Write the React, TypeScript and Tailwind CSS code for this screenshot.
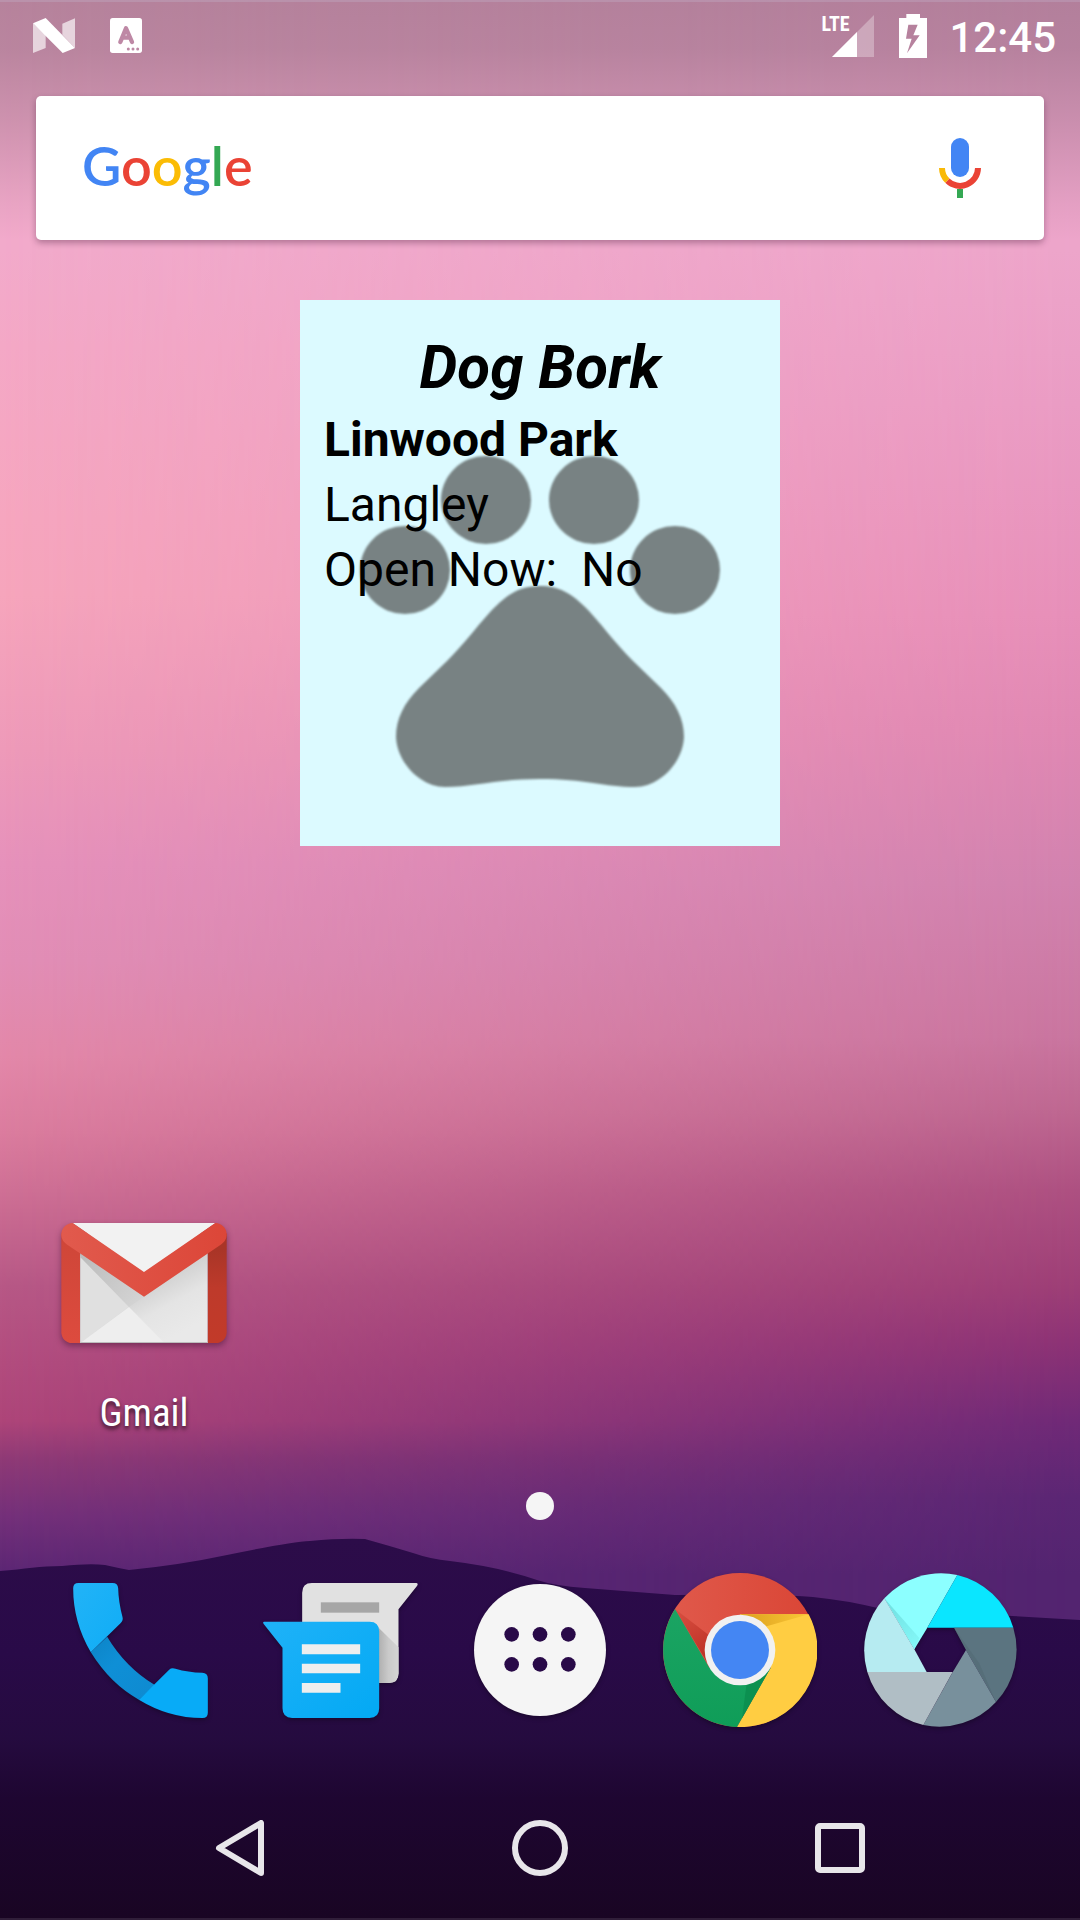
import React from "react";

function Wallpaper() {
  return (
    <div aria-hidden="true" className="absolute inset-0 -z-10 overflow-hidden bg-[linear-gradient(to_bottom,#f2aacb_0%,#f2aacb_13%,#f4a8c6_18%,#f6a6bf_27%,#f6a5bc_31%,#ee9ab9_39%,#e691bb_45%,#e28eb6_50%,#e388a9_55%,#db7c9e_59%,#cf7095_62%,#b75886_67%,#b24c7e_71%,#ae4579_74%,#8f3a76_76%,#74307a_79%,#5b2674_82%)]">
      <div className="absolute inset-0 bg-[linear-gradient(to_bottom,#eda5ca_0%,#eda5ca_13%,#ea9cc4_21%,#e78fb9_32%,#e088b3_38%,#d182ae_46%,#c9759f_54%,#bd6690_58%,#ad5081_62%,#9d3e76_67%,#8c3275_70%,#6f2977_74%,#5b2674_78%,#532470_82%)] [mask-image:linear-gradient(to_right,transparent,black)]" />
      <div className="absolute inset-x-0 top-0 h-60 bg-[linear-gradient(to_bottom,rgba(60,50,60,0.33)_0%,rgba(60,50,60,0.31)_20%,rgba(60,50,60,0.2)_50%,rgba(60,50,60,0.05)_85%,rgba(60,50,60,0)_100%)]" />
      <svg className="absolute inset-0 h-full w-full" viewBox="0 0 1080 1920" preserveAspectRatio="none">
        <defs>
          <linearGradient id="hill" x1="0" y1="1540" x2="0" y2="1920" gradientUnits="userSpaceOnUse">
            <stop offset="0" stopColor="#2c0c49" />
            <stop offset="0.3" stopColor="#290a48" />
            <stop offset="0.52" stopColor="#250b3f" />
            <stop offset="0.68" stopColor="#1e0631" />
            <stop offset="1" stopColor="#190523" />
          </linearGradient>
        </defs>
        <path fill="url(#hill)" d="M0 1571 C25 1569 40 1566 62 1566 Q90 1563 105 1565 Q118 1568 129 1570 Q180 1565 227 1555 Q290 1542 310 1541 Q340 1538 365 1539 Q390 1546 413 1553 Q430 1559 450 1561 Q500 1567 537 1580 Q555 1586 585 1588 L675 1595 Q770 1594 813 1597 Q845 1600 882 1609 Q950 1611 1012 1616 L1080 1620 V1920 H0Z" />
        <rect y="1918" width="1080" height="2" fill="#fff" opacity="0.1" />
        <rect width="1080" height="2" fill="#cfd0ea" opacity="0.2" />
      </svg>
    </div>
  );
}

function StatusBar() {
  return (
    <header className="flex h-[72px] items-start justify-between pl-[33px] pr-6 text-white">
      <div className="flex gap-[35px] pt-[18px]">
        <svg aria-label="Android N" className="h-[35px] w-[42px]" viewBox="99 55 126 105" fill="#fff">
          <path d="M99 71 L137 105 V145 L99 160Z M187 72 L225 56 V145 L187 105Z" opacity="0.65" />
          <path d="M99 71 L137 55 L225 145 L188 160Z" />
        </svg>
        <svg aria-label="Keyboard notification" className="h-[35px] w-8" viewBox="330 55 96 105">
          <rect x="330" y="55" width="96" height="105" rx="8" fill="#fff" />
          <g fill="none" stroke="#be88a5" strokeWidth="13" strokeLinecap="round" strokeLinejoin="round">
            <path d="M361 127 L378 86 L396 127 M367 114 H390" />
          </g>
          <g fill="#be88a5">
            <circle cx="385" cy="148" r="4.5" />
            <circle cx="399" cy="148" r="4.5" />
            <circle cx="413" cy="148" r="4.5" />
          </g>
        </svg>
      </div>
      <div className="flex pt-3.5">
        <div className="relative h-[43px] w-[53px]">
          <svg aria-label="Signal" className="h-full w-full" viewBox="0 0 53 43" fill="#fff">
            <path d="M11 43 L53 1 V43Z" opacity="0.3" />
            <path d="M11 43 L36 18 V43Z" />
          </svg>
          <span className="absolute left-0 top-0 font-['Roboto_Condensed',Roboto,sans-serif] text-[20px] leading-5 font-bold">LTE</span>
        </div>
        <svg aria-label="Battery charging" className="ml-[25px] h-11 w-7" viewBox="357 42 84 132">
          <path fill="#fff" fillRule="evenodd" d="M379 42 H420 V54 H441 V174 H357 V54 H379Z M385 74 L378 116 H395 L381 160 L419 106 H400 L413 74Z" />
        </svg>
        <time className="ml-[22px] text-[42px] leading-[48px] font-medium">12:45</time>
      </div>
    </header>
  );
}

function SearchBar() {
  return (
    <form role="search" className="mx-9 mt-6 flex h-36 items-center justify-between rounded-[5px] bg-white pl-[46px] pr-[63px] shadow-[0_3px_6px_rgba(60,20,50,0.35)]">
      <button type="button" className="pb-1 font-[Lato,sans-serif] text-[54px] leading-[70px] font-semibold">
        <span className="text-[#4285f4]">G</span>
        <span className="text-[#ea4335]">o</span>
        <span className="text-[#fbbc05]">o</span>
        <span className="text-[#4285f4]">g</span>
        <span className="text-[#34a853]">l</span>
        <span className="text-[#ea4335]">e</span>
      </button>
      <button type="button" aria-label="Voice search">
        <svg className="h-[60px] w-[42px]" viewBox="477 414 126 180">
          <rect x="513" y="414" width="54" height="117" rx="27" fill="#4285f4" />
          <path d="M594 504 A54 54 0 0 1 502 542" fill="none" stroke="#ea4335" strokeWidth="18" />
          <path d="M486 504 A54 54 0 0 0 502 542" fill="none" stroke="#f9b907" strokeWidth="18" />
          <rect x="531" y="567" width="18" height="27" fill="#34a853" />
        </svg>
      </button>
    </form>
  );
}

function DogParkWidget() {
  return (
    <section className="relative mx-auto mt-[60px] min-h-[546px] w-[480px] max-w-full bg-[#dcfaff] px-6 pt-8 text-black">
      <svg aria-hidden="true" className="absolute left-0 top-0 h-[546px] w-full blur-[1px]" viewBox="0 0 480 546" fill="#788283">
        <ellipse cx="186" cy="200" rx="45" ry="44" />
        <ellipse cx="294" cy="200" rx="45" ry="44" />
        <ellipse cx="105" cy="270" rx="45" ry="44" />
        <ellipse cx="375" cy="270" rx="45" ry="44" />
        <path d="M240 286 C222 286 209 292 191 311 C173 331 164 344 147 361 L119 388 C104 403 96 419 96 437 C97 463 121 487 145 487 C175 487 195 479 240 479 C285 479 305 487 335 487 C359 487 383 463 384 437 C384 419 376 403 361 388 L333 361 C316 344 307 331 289 311 C271 292 258 286 240 286Z" />
      </svg>
      <div className="relative">
        <h1 className="mb-[3px] text-center text-[60px] leading-[72px] font-bold italic">Dog Bork</h1>
        <h2 className="text-[48px] leading-[65px] font-bold">Linwood Park</h2>
        <p className="text-[48px] leading-[65px]">Langley</p>
        <p className="text-[48px] leading-[65px] whitespace-pre">Open Now:  No</p>
      </div>
    </section>
  );
}

function GmailIcon() {
  return (
    <svg aria-hidden="true" className="h-[120px] w-[166px] overflow-visible drop-shadow-[0_3px_3px_rgba(50,10,40,0.45)]" viewBox="64 69 496 360">
      <defs>
        <linearGradient id="gm-left" x1="0" y1="0" x2="0" y2="1"><stop offset="0" stopColor="#ce4638" /><stop offset="1" stopColor="#dd4b3e" /></linearGradient>
        <linearGradient id="gm-right" x1="0" y1="0" x2="0" y2="1"><stop offset="0.15" stopColor="#a93527" /><stop offset="0.5" stopColor="#be3a2b" /><stop offset="1" stopColor="#c23a29" /></linearGradient>
        <linearGradient id="gm-flap" x1="0" y1="0" x2="1" y2="0"><stop offset="0" stopColor="#e15a4d" /><stop offset="1" stopColor="#dc4638" /></linearGradient>
        <linearGradient id="gm-shade" x1="312" y1="200" x2="420" y2="400" gradientUnits="userSpaceOnUse"><stop offset="0" stopColor="#c4c4c4" /><stop offset="0.6" stopColor="#e4e4e4" /><stop offset="1" stopColor="#e9e9e9" /></linearGradient>
        <linearGradient id="gm-dark" x1="130" y1="180" x2="290" y2="320" gradientUnits="userSpaceOnUse"><stop offset="0" stopColor="#bdbdbd" /><stop offset="1" stopColor="#d4d4d4" /></linearGradient>
      </defs>
      <path fill="url(#gm-left)" d="M64 100 L121 150 V429 H96 A32 32 0 0 1 64 397Z" />
      <path fill="url(#gm-right)" d="M560 100 L503 150 V429 H528 A32 32 0 0 0 560 397Z" />
      <rect x="121" y="100" width="382" height="329" fill="url(#gm-shade)" />
      <path fill="#e0e0e0" d="M121 165 L267 320 L121 429Z" />
      <path fill="url(#gm-dark)" d="M121 150 L312 280 V290 L267 321 L121 172Z" />
      <path fill="#eee" d="M121 429 L267 321 L374 429Z" />
      <path fill="#f2f2f2" d="M98 69 H526 L312 220Z" />
      <path fill="url(#gm-flap)" d="M98 69 L312 216 L526 69 C545 70 560 84 560 103 C560 118 553 127 541 135 L312 290 L83 135 C71 127 64 118 64 103 C64 84 80 69 98 69Z" />
      <rect x="121" y="426" width="382" height="3" fill="#bdbdbd" />
    </svg>
  );
}

function PhoneIcon() {
  return (
    <svg aria-hidden="true" className="h-[135px] w-[135px]" viewBox="68 97 404 405">
      <defs>
        <linearGradient id="ph" x1="0" y1="0" x2="1" y2="1"><stop offset="0" stopColor="#22b3f7" /><stop offset="1" stopColor="#0fadf6" /></linearGradient>
        <linearGradient id="ph-h" x1="0" y1="0" x2="1" y2="1"><stop offset="0" stopColor="#0c84c6" /><stop offset="0.4" stopColor="#0f8fd6" /><stop offset="1" stopColor="#0e8ad0" /></linearGradient>
      </defs>
      <path fill="url(#ph-h)" d="M170 258 Q225 350 313 403 L265 447 Q180 400 121 305Z" />
      <path fill="url(#ph)" d="M84 97 H186 Q202 97 203 113 Q204 155 216 199 Q219 209 210 218 L121 305 Q68 215 68 113 Q68 97 84 97Z" />
      <path fill="#08abf7" d="M265 447 L356 357 Q363 350 375 354 Q413 365 455 366 Q472 367 472 383 V486 Q472 502 456 502 Q355 502 265 447Z" />
    </svg>
  );
}

function MessagesIcon() {
  return (
    <svg aria-hidden="true" className="h-[135px] w-[155px]" viewBox="638 97 464 405">
      <defs>
        <linearGradient id="ms-s" x1="985" y1="0" x2="1044" y2="0" gradientUnits="userSpaceOnUse"><stop offset="0" stopColor="#b0b0b0" /><stop offset="0.5" stopColor="#cacaca" /><stop offset="1" stopColor="#d4d4d4" /></linearGradient>
        <linearGradient id="ms" x1="0" y1="0" x2="1" y2="1"><stop offset="0" stopColor="#1fb2f8" /><stop offset="1" stopColor="#03a9f4" /></linearGradient>
      </defs>
      <path fill="#e1e1e1" d="M784 97 H1098 Q1104 98 1100 105 L1044 176 V368 Q1044 397 1015 397 H755 V126 Q755 97 784 97Z" />
      <path fill="url(#ms-s)" d="M975 222 L1044 290 V368 Q1044 397 1015 397 H975Z" />
      <rect x="811" y="155" width="175" height="31" fill="#a6a6a6" />
      <path fill="url(#ms)" d="M641 213 H957 Q986 213 986 242 V473 Q986 502 957 502 H725 Q696 502 696 473 V291 L639 219 Q636 214 641 213Z" />
      <path fill="#eee" d="M754 281 H929 V311 H754Z M754 339 H929 V368 H754Z M754 397 H870 V426 H754Z" />
    </svg>
  );
}

function AppsIcon() {
  return (
    <svg aria-hidden="true" className="h-[132px] w-[132px]" viewBox="0 0 396 396">
      <circle cx="198" cy="198" r="198" fill="#f5f5f5" />
      <g fill="#290a48">
        {[151, 241].map((cy) => [113, 198, 283].map((cx) => <circle key={`${cx}-${cy}`} cx={cx} cy={cy} r="22" />))}
      </g>
    </svg>
  );
}

function ChromeIcon() {
  return (
    <svg aria-hidden="true" className="h-[154px] w-[154px]" viewBox="69 69 462 462">
      <defs>
        <linearGradient id="cr-r" x1="0" y1="0" x2="1" y2="0"><stop offset="0" stopColor="#e05a4c" /><stop offset="1" stopColor="#da4535" /></linearGradient>
        <linearGradient id="cr-g" x1="0" y1="0" x2="0" y2="1"><stop offset="0" stopColor="#1ba463" /><stop offset="1" stopColor="#0f9d58" /></linearGradient>
        <linearGradient id="cr-y" x1="320" y1="0" x2="500" y2="0" gradientUnits="userSpaceOnUse"><stop offset="0" stopColor="#dfa320" /><stop offset="1" stopColor="#f9c736" /></linearGradient>
        <linearGradient id="cr-rs" x1="120" y1="190" x2="195" y2="320" gradientUnits="userSpaceOnUse"><stop offset="0" stopColor="#d64c3e" /><stop offset="1" stopColor="#bd3126" /></linearGradient>
      </defs>
      <circle cx="300" cy="300" r="231" fill="url(#cr-r)" />
      <path fill="url(#cr-rs)" d="M105 177 L215 262 V360Z" />
      <path fill="#ffcd42" d="M300 193 H506 A231 231 0 0 1 291 531 L392 353Z" />
      <path fill="url(#cr-y)" d="M300 193 H506 L380 229Z" />
      <path fill="url(#cr-g)" d="M105 177 L208 353 L300 300 L392 353 L291 531 A231 231 0 0 1 105 177Z" />
      <path fill="#0c9050" d="M392 353 L306 505 L320 400Z" />
      <circle cx="300" cy="300" r="106" fill="#f1f1f1" />
      <circle cx="300" cy="300" r="87" fill="#4486f3" />
    </svg>
  );
}

function CameraIcon() {
  return (
    <svg aria-hidden="true" className="h-[154px] w-[154px]" viewBox="669 69 462 462">
      <defs>
        <linearGradient id="cm-a" x1="733" y1="145" x2="823" y2="298" gradientUnits="userSpaceOnUse"><stop offset="0" stopColor="#6fdedf" /><stop offset="1" stopColor="#84f8f8" /></linearGradient>
        <linearGradient id="cm-b" x1="1068" y1="0" x2="1000" y2="40" gradientUnits="userSpaceOnUse"><stop offset="0" stopColor="#566f7a" /><stop offset="1" stopColor="#5b7480" /></linearGradient>
      </defs>
      <path fill="#8cffff" d="M823 298 L733 145 A231 231 0 0 1 952 75 L862 233Z" />
      <path fill="url(#cm-a)" d="M733 145 L838 264 L823 298Z" />
      <path fill="#0ae6ff" d="M862 233 L952 75 A231 231 0 0 1 1120 233Z" />
      <path fill="url(#cm-b)" d="M942 233 H1120 A231 231 0 0 1 1068 456 L978 300Z" />
      <path fill="#4c636d" opacity="0.35" d="M942 233 L1068 456 L1018 340Z" />
      <path fill="#78909c" d="M978 300 L1068 456 A231 231 0 0 1 850 525 L938 367Z" />
      <path fill="#b0bec5" d="M860 366 H938 L850 525 A231 231 0 0 1 682 366Z" />
      <path fill="#b6ebf1" d="M860 366 H682 A231 231 0 0 1 733 145 L823 298Z" />
    </svg>
  );
}

const dock = [
  { label: "Phone", Icon: PhoneIcon },
  { label: "Messages", Icon: MessagesIcon },
  { label: "All apps", Icon: AppsIcon },
  { label: "Chrome", Icon: ChromeIcon },
  { label: "Camera", Icon: CameraIcon },
];

function NavigationBar() {
  return (
    <nav aria-label="System navigation" className="grid h-36 grid-cols-3 place-items-center px-[90px]">
      <button type="button" aria-label="Back">
        <svg className="h-14 w-14" viewBox="0 0 56 56" fill="none" stroke="#e8e6ea" strokeWidth="6" strokeLinejoin="round">
          <path d="M49 3 V53 L7 28Z" />
        </svg>
      </button>
      <button type="button" aria-label="Home" className="h-14 w-14 rounded-full border-6 border-[#e8e6ea]" />
      <button type="button" aria-label="Recent apps" className="h-[50px] w-[50px] rounded-[5px] border-6 border-[#e8e6ea]" />
    </nav>
  );
}

export default function App() {
  return (
    <div className="relative isolate flex min-h-screen flex-col font-[Roboto,sans-serif]">
      <Wallpaper />
      <StatusBar />
      <main className="flex flex-1 flex-col">
        <SearchBar />
        <DogParkWidget />
        <div className="mt-auto px-9">
          <button type="button" className="flex w-[216px] flex-col items-center gap-[46px]">
            <GmailIcon />
            <span className="font-['Roboto_Condensed',Roboto,sans-serif] text-[39px] leading-[48px] text-white [text-shadow:0_3px_4px_rgba(0,0,0,0.7)]">Gmail</span>
          </button>
        </div>
        <div className="mx-auto mt-[55px] mb-1 h-7 w-7 rounded-full bg-[#f5f5f5]" />
        <div className="grid h-[252px] grid-cols-5 place-items-center px-10">
          {dock.map(({ label, Icon }) => (
            <button key={label} type="button" aria-label={label} className="drop-shadow-[0_2px_2px_rgba(0,0,0,0.3)]">
              <Icon />
            </button>
          ))}
        </div>
      </main>
      <NavigationBar />
    </div>
  );
}
